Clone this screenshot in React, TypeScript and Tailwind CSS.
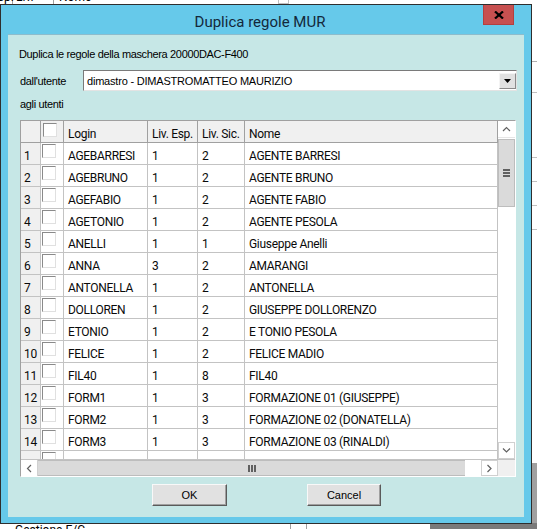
import React from "react";

const rows: [string, string, string, string, string][] = [
  ["1", "AGEBARRESI", "1", "2", "AGENTE BARRESI"],
  ["2", "AGEBRUNO", "1", "2", "AGENTE BRUNO"],
  ["3", "AGEFABIO", "1", "2", "AGENTE FABIO"],
  ["4", "AGETONIO", "1", "2", "AGENTE PESOLA"],
  ["5", "ANELLI", "1", "1", "Giuseppe Anelli"],
  ["6", "ANNA", "3", "2", "AMARANGI"],
  ["7", "ANTONELLA", "1", "2", "ANTONELLA"],
  ["8", "DOLLOREN", "1", "2", "GIUSEPPE DOLLORENZO"],
  ["9", "ETONIO", "1", "2", "E TONIO PESOLA"],
  ["10", "FELICE", "1", "2", "FELICE MADIO"],
  ["11", "FIL40", "1", "8", "FIL40"],
  ["12", "FORM1", "1", "3", "FORMAZIONE 01 (GIUSEPPE)"],
  ["13", "FORM2", "1", "3", "FORMAZIONE 02 (DONATELLA)"],
  ["14", "FORM3", "1", "3", "FORMAZIONE 03 (RINALDI)"],
];

function Chk() {
  return (
    <div className="w-[14px] h-[14px] bg-white border border-t-[#8a8a8a] border-l-[#8a8a8a] border-r-[#e0e0e0] border-b-[#e0e0e0]" />
  );
}

function Chev({ dir }: { dir: "up" | "down" | "left" | "right" }) {
  const pts =
    dir === "up"
      ? "1,5 4.5,1.5 8,5"
      : dir === "down"
      ? "1,1.5 4.5,5 8,1.5"
      : dir === "left"
      ? "5,1 1.5,4.5 5,8"
      : "1.5,1 5,4.5 1.5,8";
  const w = dir === "up" || dir === "down" ? 9 : 7;
  const h = dir === "up" || dir === "down" ? 7 : 9;
  return (
    <svg width={w} height={h} viewBox={`0 0 ${w} ${h}`}>
      <polyline points={pts} fill="none" stroke="#606060" strokeWidth="1.2" />
    </svg>
  );
}

export default function App() {
  return (
    <div className="relative w-[537px] h-[529px] overflow-hidden bg-white">
      {/* background window (behind dialog) */}
      <div className="absolute left-0 top-0 w-[537px] h-[5px] overflow-hidden bg-white">
        <div className="flex h-[14px] -mt-[10px] font-['Roboto',sans-serif] text-[12px] leading-[14px] text-black">
          <div className="w-[22px] border-r border-[#a0a0a0] -ml-[9px] pl-0">Esp.</div>
          <div className="w-[41px] border-r border-[#a0a0a0] pl-[3px]">Liv. Sic.</div>
          <div className="w-[224px] pl-[5px]">Nome</div>
          <div className="w-[11px] border border-[#c0c0c0]" />
        </div>
      </div>
      <div className="absolute left-[531px] top-0 w-[6px] h-[529px] bg-white flex flex-col">
        <div className="h-[62px] border-b border-[#b0b0b0]" />
        <div className="h-[31px] border-b border-[#c0c0c0]" />
        <div className="h-[65px] border-b border-[#c0c0c0]" />
        <div className="h-[24px] border-b border-[#c0c0c0]" />
        <div className="h-[24px] border-b border-[#c0c0c0]" />
        <div className="h-[24px] border-b border-[#c0c0c0]" />
        <div className="flex-1" />
        <div className="h-[66px] bg-[#a0a0a0]" />
      </div>
      <div className="absolute left-0 top-[523px] w-[537px] h-[6px] bg-white overflow-hidden">
        <div className="flex h-[6px]">
          <div className="w-[290px] pl-[15px]">
            <div className="font-['Roboto',sans-serif] text-[12px] leading-[12px] mt-[1px] text-black">Gestione E/C</div>
          </div>
          <div className="w-[16px] border-l border-[#a0a0a0]" />
          <div className="w-[124px] border-l border-[#a0a0a0]" />
          <div className="flex-1 bg-[#7a7a7a]" />
        </div>
      </div>

      {/* dialog window */}
      <div className="absolute left-0 top-[4px] w-[532px] h-[520px] border border-[#2e2e2e] bg-[#66c9ea] px-[7px] pb-[6px] flex flex-col">
        <div className="h-[29px] flex shrink-0">
          <div className="flex-1 pl-[29px] pt-[5px] flex items-center justify-center font-['Roboto',sans-serif] text-[15px] text-[#13283a]">
            Duplica regole MUR
          </div>
          <div className="w-[31px] h-[20px] mr-[10px] bg-[#c75050] border border-[#b43f3f] border-t-0 flex items-center justify-center">
            <svg width="10" height="8" viewBox="0 0 10 8">
              <line x1="1" y1="0.5" x2="9" y2="7.5" stroke="#000" strokeWidth="2.2" />
              <line x1="9" y1="0.5" x2="1" y2="7.5" stroke="#000" strokeWidth="2.2" />
            </svg>
          </div>
        </div>

        <div className="w-[516px] h-[483px] bg-[#c6e7e6] border-t border-[#8dbccc] flex flex-col font-['Liberation_Sans',sans-serif] text-[11px] tracking-[-0.35px] text-black">
          <div className="mt-[11px] h-[14px] leading-[16px] pl-[11px]">
            Duplica le regole della maschera 20000DAC-F400
          </div>
          <div className="mt-[10px] h-[21px] flex items-center pl-[12px]">
            <div className="w-[63px] pt-[2px]">dall'utente</div>
            <div className="w-[434px] h-[21px] bg-white border border-t-[#7a7a7a] border-l-[#7a7a7a] border-r-[#e3e3e3] border-b-[#e3e3e3] flex items-center">
              <div className="flex-1 pl-[3px] pt-[1px] tracking-[-0.2px]">dimastro - DIMASTROMATTEO MAURIZIO</div>
              <div className="w-[17px] h-[16px] mt-[1px] bg-[#e1e1e1] border border-t-[#f4f4f4] border-l-[#f4f4f4] border-r-[#8a8a8a] border-b-[#8a8a8a] flex items-center justify-center">
                <svg width="7" height="4" viewBox="0 0 7 4">
                  <polygon points="0,0 7,0 3.5,4" fill="#000" />
                </svg>
              </div>
            </div>
          </div>
          <div className="mt-[5px] h-[14px] leading-[16px] pl-[12px]">agli utenti</div>

          {/* grid */}
          <div className="mt-[10px] ml-[12px] w-[496px] h-[357px] border border-t-[#a0a0a0] border-l-[#a0a0a0] border-r-white border-b-white flex flex-col font-['Roboto',sans-serif] text-[12px] tracking-[-0.3px] text-[#0a0a0a]">
            <div className="flex h-[338px]">
              <div className="w-[477px] h-[338px] overflow-hidden bg-white flex flex-col">
                {/* header */}
                <div className="flex h-[22px] shrink-0 bg-[#f0f0f0] border-b border-[#a0a0a0]">
                  <div className="w-[20px] border-r border-[#a0a0a0]" />
                  <div className="w-[23px] border-r border-[#a0a0a0] pl-[2px] pt-[2px]">
                    <Chk />
                  </div>
                  <div className="w-[84px] border-r border-[#a0a0a0] pl-[4px] pt-[4px] flex items-center">Login</div>
                  <div className="w-[50px] border-r border-[#a0a0a0] pl-[4px] pt-[4px] flex items-center">Liv. Esp.</div>
                  <div className="w-[47px] border-r border-[#a0a0a0] pl-[4px] pt-[4px] flex items-center">Liv. Sic.</div>
                  <div className="w-[253px] border-r border-[#a0a0a0] pl-[4px] pt-[4px] flex items-center">Nome</div>
                </div>
                {rows.map((r) => (
                  <div key={r[0]} className="flex h-[22px] shrink-0 border-b border-[#c3c3c3]">
                    <div className="w-[20px] bg-[#f0f0f0] border-r border-[#c3c3c3] pl-[3px] pt-[4px] flex items-center">{r[0]}</div>
                    <div className="w-[23px] border-r border-[#c3c3c3] pl-[1px] pt-[1px]">
                      <Chk />
                    </div>
                    <div className="w-[84px] border-r border-[#c3c3c3] pl-[4px] pt-[4px] flex items-center whitespace-nowrap">{r[1]}</div>
                    <div className="w-[50px] border-r border-[#c3c3c3] pl-[4px] pt-[4px] flex items-center">{r[2]}</div>
                    <div className="w-[47px] border-r border-[#c3c3c3] pl-[4px] pt-[4px] flex items-center">{r[3]}</div>
                    <div className="w-[253px] border-r border-[#c3c3c3] pl-[4px] pt-[4px] flex items-center whitespace-nowrap">{r[4]}</div>
                  </div>
                ))}
                <div className="flex h-[22px] shrink-0">
                  <div className="w-[20px] bg-[#f0f0f0] border-r border-[#c3c3c3]" />
                  <div className="w-[23px] border-r border-[#c3c3c3] pl-[1px] pt-[1px]">
                    <Chk />
                  </div>
                  <div className="w-[84px] border-r border-[#c3c3c3]" />
                  <div className="w-[50px] border-r border-[#c3c3c3]" />
                  <div className="w-[47px] border-r border-[#c3c3c3]" />
                  <div className="w-[253px] border-r border-[#c3c3c3]" />
                </div>
              </div>
              {/* vertical scrollbar */}
              <div className="w-[17px] h-[338px] bg-white flex flex-col">
                <div className="h-[17px] border-b border-[#e6e6e6] flex items-center justify-center">
                  <Chev dir="up" />
                </div>
                <div className="mt-[1px] h-[68px] bg-[#dadada] border border-[#bdbdbd] flex flex-col items-center justify-center gap-[1px]">
                  <div className="w-[7px] h-[2px] bg-[#606060]" />
                  <div className="w-[7px] h-[2px] bg-[#606060]" />
                  <div className="w-[7px] h-[2px] bg-[#606060]" />
                </div>
                <div className="flex-1" />
                <div className="h-[17px] border border-[#d0d0d0] flex items-center justify-center">
                  <Chev dir="down" />
                </div>
              </div>
            </div>
            {/* horizontal scrollbar */}
            <div className="flex h-[17px] border-t border-[#c3c3c3]">
              <div className="w-[17px] bg-white border-r border-[#d0d0d0] flex items-center justify-center">
                <Chev dir="left" />
              </div>
              <div className="w-[427px] bg-[#dadada] border-y border-[#bdbdbd] flex items-center justify-center gap-[1px]">
                <div className="w-[2px] h-[7px] bg-[#606060]" />
                <div className="w-[2px] h-[7px] bg-[#606060]" />
                <div className="w-[2px] h-[7px] bg-[#606060]" />
              </div>
              <div className="w-[16px] bg-white" />
              <div className="w-[17px] bg-white border border-[#d0d0d0] flex items-center justify-center">
                <Chev dir="right" />
              </div>
              <div className="w-[17px] bg-[#f0f0f0]" />
            </div>
          </div>

          {/* buttons */}
          <div className="mt-[7px] flex pl-[144px] gap-[80px] tracking-normal">
            <button className="w-[75px] h-[22px] pt-[1px] bg-[#e1e1e1] border border-t-[#f8f8f8] border-l-[#f8f8f8] border-r-[#5a5a5a] border-b-[#5a5a5a] shadow-[inset_-1px_-1px_0_#a0a0a0] text-[11px] font-['Liberation_Sans',sans-serif] text-black">
              OK
            </button>
            <button className="w-[74px] h-[22px] pt-[1px] bg-[#e1e1e1] border border-t-[#f8f8f8] border-l-[#f8f8f8] border-r-[#5a5a5a] border-b-[#5a5a5a] shadow-[inset_-1px_-1px_0_#a0a0a0] text-[11px] font-['Liberation_Sans',sans-serif] text-black">
              Cancel
            </button>
          </div>
        </div>
      </div>
    </div>
  );
}
